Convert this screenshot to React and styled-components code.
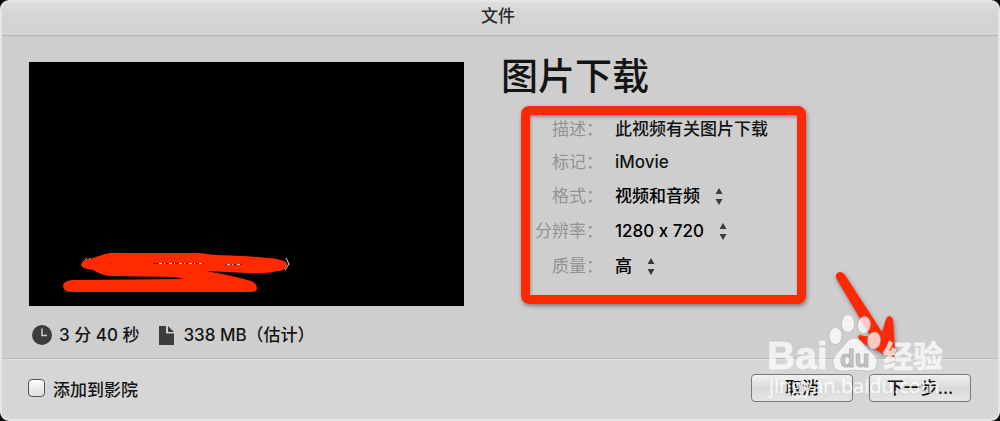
import styled, { createGlobalStyle } from "styled-components";

const GlobalStyle = createGlobalStyle`
    * {
        box-sizing: border-box;
    }
    body {
        margin: 0;
        background: #0a0a0a;
        color: #141414;
        font-family: Inter, "Noto Sans CJK SC", sans-serif;
        font-size: 17px;
        font-weight: 500;
        /* keeps the x in "1280 x 720" a plain letter */
        font-variant-ligatures: no-contextual;
    }
    button, select, input {
        font: inherit;
        font-variant-ligatures: no-contextual;
        color: inherit;
    }
`;

const Window = styled.div`
    position: relative;
    display: flex;
    flex-direction: column;
    min-height: 100vh;
    border: 2px solid #e6e6e6;
    border-radius: 9px;
    background: #cecece;
    overflow: hidden;
`;

const TitleBar = styled.header`
    padding: 2px 4px 7px 0;
    border-bottom: 1px solid #b4b4b4;
    background: linear-gradient(#dedede, #d4d4d4 50%);
    font-size: 17px;
    line-height: 24px;
    text-align: center;
    color: #2a2a2a;
`;

const Content = styled.main`
    flex: 1;
    display: grid;
    grid-template-columns: 435fr 470fr;
    column-gap: 37px;
    padding: 26px 27px 8px;
`;

const Preview = styled.div`
    aspect-ratio: 435 / 244;
    background: #000;
    svg {
        display: block;
        width: 100%;
        height: 100%;
    }
`;

const Stats = styled.div`
    display: flex;
    align-items: center;
    column-gap: 20px;
    margin-top: 17px;
    padding-left: 3px;
`;

const Stat = styled.span`
    display: flex;
    align-items: center;
    column-gap: ${({ $gap }) => $gap};
    line-height: 24px;
    white-space: nowrap;
`;

const Heading = styled.h1`
    margin: 0;
    padding-top: 3px;
    font-size: 37px;
    font-weight: 500;
    line-height: 24px;
`;

const Details = styled.div`
    display: flex;
    flex-direction: column;
    row-gap: 7px;
    width: 285px;
    max-width: 100%;
    margin: 17px 0 0 20px;
    border: 9px solid #fc2a04;
    border-radius: 8px;
    padding: 1px 0 15px;
    box-shadow: 1px 2px 4px rgba(0, 0, 0, 0.4), inset 1px 2px 3px rgba(0, 0, 0, 0.3);
`;

const Row = styled.div`
    display: grid;
    grid-template-columns: 73px 1fr;
    column-gap: 12px;
    align-items: center;
    line-height: ${({ $tall }) => ($tall ? "28px" : "26px")};
`;

const RowLabel = styled.label`
    text-align: right;
    color: #939393;
    font-weight: 400;
`;

const Picker = styled.span`
    display: flex;
    align-items: center;
    column-gap: 15px;
    color: #000;
`;

const Select = styled.select`
    appearance: none;
    height: 28px;
    padding: 0;
    border: 0;
    background: none;
`;

const Footer = styled.footer`
    display: flex;
    align-items: center;
    justify-content: space-between;
    padding: 15px 27px 17px 26px;
    border-top: 1px solid #b8b8b8;
    background: #d6d6d6;
    box-shadow: inset 0 1px #dedede;
`;

const CheckLabel = styled.label`
    display: flex;
    align-items: center;
    column-gap: 8px;
`;

const Checkbox = styled.input`
    appearance: none;
    width: 17px;
    height: 18px;
    margin: 0;
    border: 1px solid #555;
    border-radius: 4px;
    background: linear-gradient(#fff, #dcdcdc);
    &:checked {
        background: #555;
    }
`;

const Buttons = styled.div`
    display: flex;
    column-gap: 16px;
`;

const Button = styled.button`
    width: 102px;
    height: 28px;
    padding: 0;
    border: 1px solid #777;
    border-radius: 4px;
    background: linear-gradient(#f2f2f2, #d9d9d9 50%, #e6e6e6);
    line-height: 24px;
    color: #111;
`;

const Overlay = styled.svg`
    position: absolute;
    right: 38px;
    bottom: 14px;
    pointer-events: none;
`;

const ClockIcon = () => (
    <svg width="20" height="20" viewBox="0 0 20 20">
        <circle cx="10" cy="10" r="10" fill="#3c3c3c" />
        <path d="M10 3.5V10.5H15" fill="none" stroke="#cecece" strokeWidth="1.5" />
    </svg>
);

const FileIcon = () => (
    <svg width="15" height="19" viewBox="0 0 15 19">
        <path d="M0 0H7V7.500H15V19H0Z" fill="#3c3c3c" />
        <path d="M9 0L15 6H9Z" fill="#3c3c3c" />
    </svg>
);

const Arrows = () => (
    <svg width="8" height="17" viewBox="0 0 8 17">
        <path d="M4 0L7.500 6H0.500ZM4 17L7.500 11H0.500Z" fill="#3a3a3a" />
    </svg>
);

const Scribble = () => (
    <svg viewBox="0 0 435 244">
        <path d="M58 196L54 201L57 206M61 196L58 200M257 196L260 202L256 208M243 196V201" fill="none" stroke="#ddd" strokeWidth="1" />
        <path
            d="M52 203Q53 197 61 197L76 192Q83 190 92 191H170L187 193L215 194L240 196Q260 198 258 204Q256 209 249 209Q236 212 218 211L177 209Q206 214 222 219Q228 221 228 227Q227 230 222 230H40Q34 229 34 223Q35 219 43 218L155 217L145 215L80 214Q72 213 64 208Q53 207 52 203Z"
            fill="#ff2a00"
        />
        <path d="M124 201.500H175M196 202.500H213" stroke="#8c1c08" strokeWidth="1" />
        <path d="M130 201.500H174M198 202.500H211" stroke="#f0d8b8" strokeWidth="1" strokeDasharray="3 2 1 4" />
    </svg>
);

const Annotations = () => (
    <Overlay width="200" height="140" viewBox="760 265 200 140" aria-hidden="true">
        <path
            d="M836 278Q835 273 840 272Q843 272 845 275L882 332L886 319Q889 313 893 319L895 350Q896 359 889 357L861 342Q857 339 859 335L871 337L836 278Z"
            fill="#fc2a04"
            style={{ filter: "drop-shadow(1px 2px 2px rgba(0, 0, 0, 0.4))" }}
        />
        <g fill="#fff" fillOpacity="0.75" stroke="#aaa" strokeOpacity="0.5" strokeWidth="1">
            <ellipse cx="835.500" cy="336" rx="6.500" ry="8.500" />
            <ellipse cx="848" cy="323.500" rx="6.500" ry="9" />
            <ellipse cx="864" cy="325" rx="6.500" ry="8.500" transform="rotate(8 864 325)" />
            <ellipse cx="874" cy="340.500" rx="6.500" ry="8.500" transform="rotate(8 874 340.500)" />
            <path d="M854 338Q860 338 864 345Q867 349 872 353Q878 358 877 363Q876 372 867 371L855 370L842 371Q833 371 833 362Q833 357 838 352L845 344Q849 338 854 338Z" />
        </g>
        <g fill="#fff" fillOpacity="0.75" stroke="#f4f4f4" strokeOpacity="0.7" strokeWidth="1" fontWeight="700">
            <text x="767" y="369" fontFamily="Liberation Sans, sans-serif" fontSize="39">Bai</text>
            <text x="883" y="367" fontFamily="Noto Sans CJK SC, sans-serif" fontSize="30">经验</text>
        </g>
        <text x="840" y="367" fill="#c6c6c6" stroke="#b4b4b4" strokeWidth="1" fontFamily="Liberation Sans, sans-serif" fontSize="24" fontWeight="700">du</text>
        <text x="769" y="393" fill="#fff" fillOpacity="0.85" fontFamily="Open Sans, sans-serif" fontSize="20" fontWeight="400">
            jingyan.baidu.com
        </text>
    </Overlay>
);

const PickerRow = ({ id, label, value }) => (
    <Row $tall>
        <RowLabel htmlFor={id}>{label}：</RowLabel>
        <Picker>
            <Select id={id} defaultValue={value}>
                <option>{value}</option>
            </Select>
            <Arrows />
        </Picker>
    </Row>
);

const App = () => {
    return (
        <>
            <GlobalStyle />
            <Window>
                <TitleBar>文件</TitleBar>
                <Content>
                    <div>
                        <Preview>
                            <Scribble />
                        </Preview>
                        <Stats>
                            <Stat $gap="7px">
                                <ClockIcon />3 分 40 秒
                            </Stat>
                            <Stat $gap="9px">
                                <FileIcon />338 MB（估计）
                            </Stat>
                        </Stats>
                    </div>
                    <div>
                        <Heading>图片下载</Heading>
                        <Details>
                            <Row>
                                <RowLabel as="span">描述：</RowLabel>
                                <span>此视频有关图片下载</span>
                            </Row>
                            <Row>
                                <RowLabel as="span">标记：</RowLabel>
                                <span>iMovie</span>
                            </Row>
                            <PickerRow id="format" label="格式" value="视频和音频" />
                            <PickerRow id="resolution" label="分辨率" value="1280 x 720" />
                            <PickerRow id="quality" label="质量" value="高" />
                        </Details>
                    </div>
                </Content>
                <Footer>
                    <CheckLabel>
                        <Checkbox type="checkbox" />
                        添加到影院
                    </CheckLabel>
                    <Buttons>
                        <Button type="button">取消</Button>
                        <Button type="button">下一步...</Button>
                    </Buttons>
                </Footer>
                <Annotations />
            </Window>
        </>
    );
};

export default App;
